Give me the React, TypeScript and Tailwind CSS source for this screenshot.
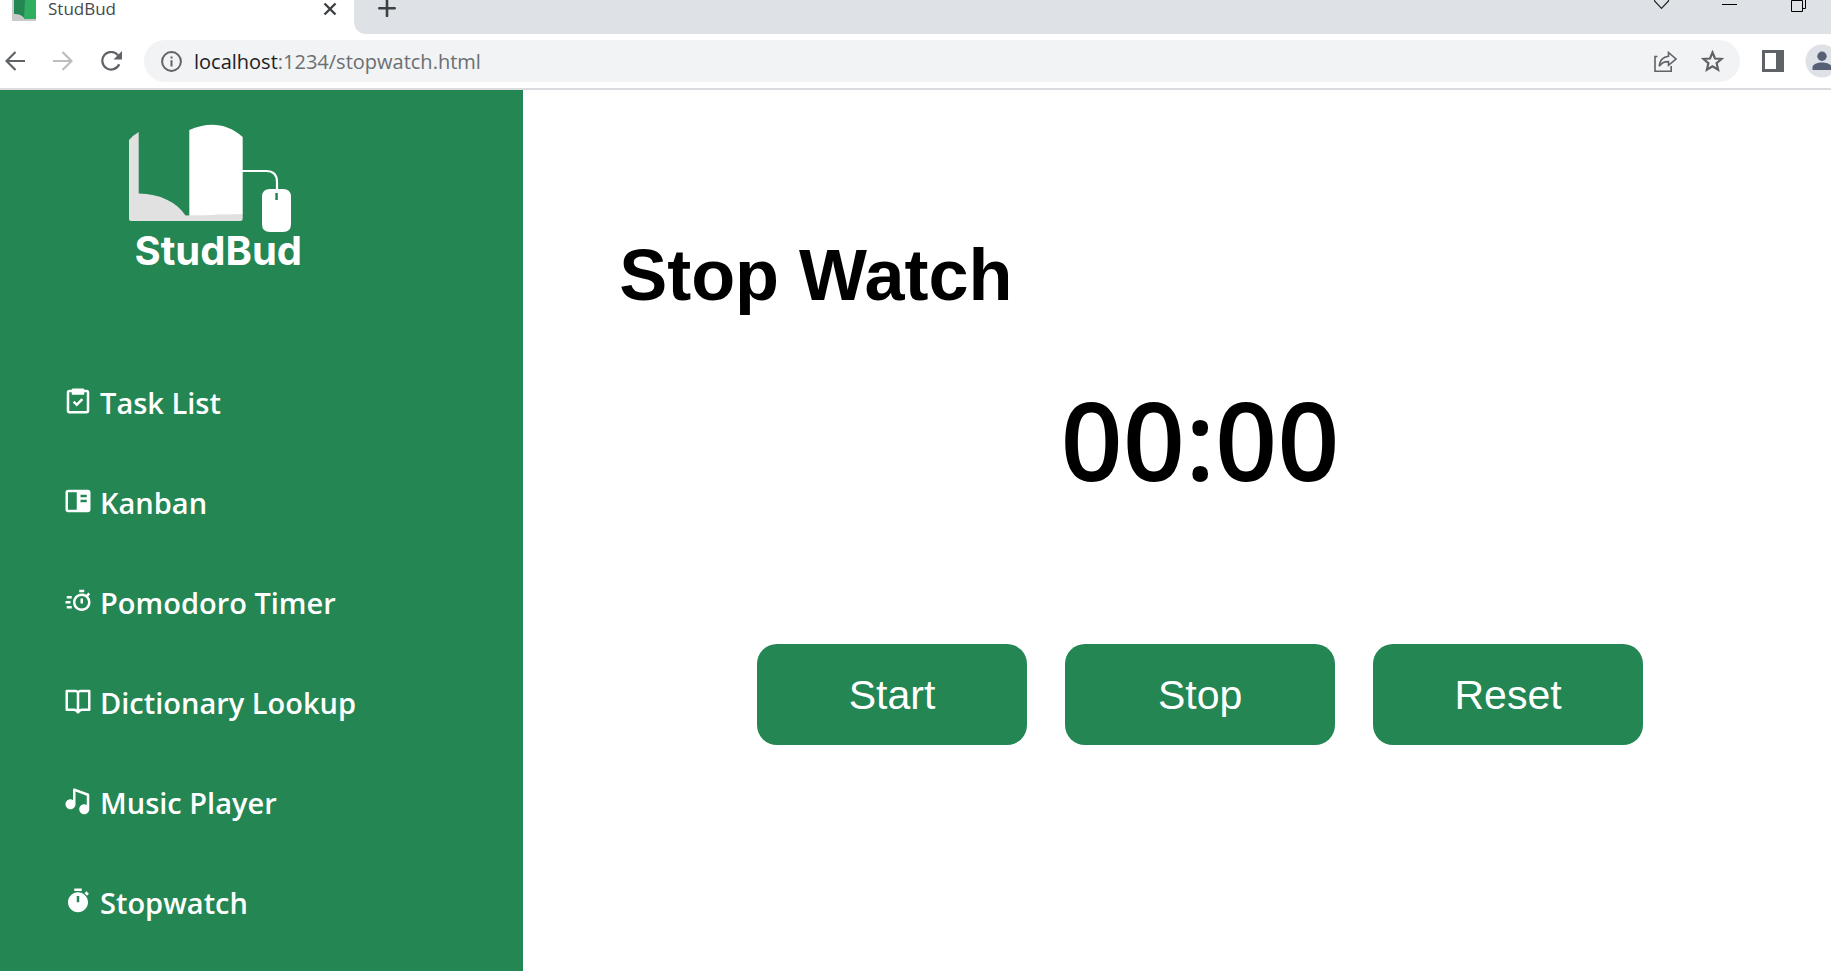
import { useEffect, useState } from "react";
import type { ReactNode } from "react";
import {
  BiBookOpen,
  BiSolidBookContent,
  BiSolidMusic,
  BiSolidStopwatch,
  BiTask,
  BiTimer,
} from "react-icons/bi";

const links = [
  { label: "Task List", icon: BiTask },
  { label: "Kanban", icon: BiSolidBookContent },
  { label: "Pomodoro Timer", icon: BiTimer },
  { label: "Dictionary Lookup", icon: BiBookOpen },
  { label: "Music Player", icon: BiSolidMusic },
  { label: "Stopwatch", icon: BiSolidStopwatch },
];

function IconButton({ label, className = "", children }: { label: string; className?: string; children: ReactNode }) {
  return (
    <button type="button" aria-label={label} className={`shrink-0 ${className}`}>
      {children}
    </button>
  );
}

function TabStrip() {
  return (
    <header className="flex h-[34px] bg-white">
      <div className="flex h-[17px] w-[354px] shrink-0 items-center pr-[17px] pl-3">
        <svg width="24" height="21" viewBox="0 0 24 21" className="mt-1 shrink-0" aria-hidden="true">
          <path d="M0 0H24V21H0Z" fill="#c9c9c9" />
          <path d="M2 0H13V19C10 15 7 14 2 14Z" fill="#238653" />
          <path d="M13 0H24V19H12Z" fill="#2fae62" />
        </svg>
        <span className="ml-3 grow text-[17px] leading-[17px] text-[#45494d]">StudBud</span>
        <IconButton label="Close tab">
          <svg width="14" height="14" viewBox="0 0 14 14" fill="none" stroke="#3c4043" strokeWidth="2.4" className="block">
            <path d="M1.5 1.5 12.5 12.5M12.5 1.5 1.5 12.5" />
          </svg>
        </IconButton>
      </div>
      <div className="flex grow rounded-bl-xl bg-[#dee1e6] pr-6 pl-6">
        <div className="flex h-[17px] grow items-start">
          <IconButton label="New tab">
            <svg width="18" height="17" viewBox="0 0 18 17" fill="none" stroke="#3c4043" strokeWidth="2.6" strokeLinecap="round" className="block">
              <path d="M9 0V16M1.3 8.2H16.7" />
            </svg>
          </IconButton>
          <div className="ml-auto flex items-start">
            <IconButton label="Search tabs">
              <svg width="16" height="10" viewBox="0 0 16 10" fill="none" stroke="#222" strokeWidth="1.2" className="block">
                <path d="M.5 0V1L7.500 8.300 14.500 1V0" />
              </svg>
            </IconButton>
            <IconButton label="Minimize" className="ml-[52px]">
              <svg width="16" height="10" viewBox="0 0 16 10" className="block">
                <path d="M0 4H15V5H0Z" />
              </svg>
            </IconButton>
            <IconButton label="Restore" className="ml-[53px]">
              <svg width="16" height="12" viewBox="0 0 16 12" fill="none" stroke="#000" className="block">
                <path d="M.5 .5H11.5V11.5H.5ZM14.5 0V8.5H11.5" />
              </svg>
            </IconButton>
          </div>
        </div>
      </div>
    </header>
  );
}

function Toolbar() {
  return (
    <div className="flex h-14 items-center overflow-hidden border-b-2 border-[#dadce0] bg-white pl-[5px]">
      <IconButton label="Back">
        <svg width="20" height="20" viewBox="0 0 20 20" fill="none" stroke="#5f6368" strokeWidth="2.2" className="block">
          <path d="M20 10H2M10.500 1 1.500 10 10.500 19" />
        </svg>
      </IconButton>
      <IconButton label="Forward" className="ml-7">
        <svg width="20" height="20" viewBox="0 0 20 20" fill="none" stroke="#bbbdbf" strokeWidth="2.2" className="block">
          <path d="M0 10H18M9.500 1 18.500 10 9.500 19" />
        </svg>
      </IconButton>
      <IconButton label="Reload" className="ml-7">
        <svg width="22" height="20" viewBox="0 0 22 20" fill="none" stroke="#5f6368" strokeWidth="2.200" className="block">
          <path d="M18.2 13.2A8.8 8.8 0 1 1 17 4.2" />
          <path d="M21 0V8.5H12.5Z" fill="#5f6368" stroke="none" />
        </svg>
      </IconButton>
      <div className="ml-[21px] flex h-[42px] min-w-0 grow items-center rounded-full bg-[#f1f3f4] pr-4 pl-[17px]">
        <svg width="21" height="21" viewBox="0 0 21 21" fill="none" stroke="#5f6368" strokeWidth="2" className="shrink-0" aria-hidden="true">
          <circle cx="10.500" cy="10.500" r="9.400" />
          <path d="M10.500 9.300V15.500M10.500 5.400V7.600" />
        </svg>
        <p className="ml-3 grow pt-0.5 text-[20px] leading-[28px] text-[#6b6f73]">
          <span className="text-[#202124]">localhost</span>:1234/stopwatch.html
        </p>
        <IconButton label="Share">
          <svg width="23" height="21" viewBox="0 0 23 21" fill="none" stroke="#5f6368" strokeWidth="1.6" className="block">
            <path d="M3.5 5.5H1V20.2H17.2V15" />
            <path d="M14.5 1.5 22 8 14.5 14.3V10.6C10 10.4 7.5 11.8 5.2 15.2 5.8 9.5 8.5 6 14.5 5.3Z" />
          </svg>
        </IconButton>
        <IconButton label="Bookmark" className="ml-6">
          <svg width="23" height="22" viewBox="0 0 23 22" fill="none" stroke="#5f6368" strokeWidth="2.2" className="block">
            <path d="M11.5 2.5 14 8.500 20.500 9 15.600 13.200 17.100 19.600 11.500 16.200 5.900 19.600 7.400 13.200 2.500 9 9 8.500Z" />
          </svg>
        </IconButton>
      </div>
      <IconButton label="Side panel" className="ml-[22px]">
        <svg width="22" height="22" viewBox="0 0 22 22" className="block">
          <path d="M0 0H22V22H0ZM3 3V19H14V3Z" fill="#5f6368" fillRule="evenodd" />
        </svg>
      </IconButton>
      <IconButton label="Profile" className="-mr-2 ml-[21px]">
        <svg width="34" height="34" viewBox="0 0 34 34" className="block">
          <circle cx="17" cy="17" r="16.5" fill="#dee1e6" />
          <circle cx="17" cy="12.3" r="4.7" fill="#566176" />
          <path d="M7.5 26V23.5C7.5 20.3 12.5 18.6 17 18.6S26.5 20.3 26.5 23.5V26Z" fill="#566176" />
        </svg>
      </IconButton>
    </div>
  );
}

function Logo() {
  return (
    <a href="#home" aria-label="StudBud" className="ml-[129px] flex w-[173px] flex-col items-end text-white">
      <svg width="173" height="110" viewBox="0 0 173 110" className="block" aria-hidden="true">
        <path d="M0 17Q4.500 12 9.700 9V70.500C31 71 48 79 56.500 92.500L113.700 90.500V95.500Q113.700 98 111.500 98H2Q0 98 0 96Z" fill="#e1e1e1" />
        <path d="M60.300 7C78 -1 97 -1 113.700 14V91L60.300 92.700Z" fill="#fff" />
        <path d="M113 48H137Q148 48 148 59V68" fill="none" stroke="#fff" strokeWidth="2.200" />
        <path
          d="M141 66H154Q162 66 162 74V101Q162 109 154 109H141Q133 109 133 101V74Q133 66 141 66ZM146.300 70V77H148.800V70Z"
          fill="#fff"
          fillRule="evenodd"
        />
      </svg>
      <span className="-mt-1 font-['Inter',sans-serif] text-[40px] leading-[44px] font-bold">StudBud</span>
    </a>
  );
}

function Sidebar() {
  return (
    <aside className="w-2/7 shrink-0 bg-[#238653] pt-[33px]">
      <Logo />
      <nav className="mt-20 pl-[63px]">
        <ul>
          {links.map(({ label, icon: Icon }) => (
            <li key={label} className="flex h-[100px] items-center">
              <a href={`#${label.toLowerCase().replace(" ", "-")}`} className="flex items-center gap-[7px] text-[29px] leading-[40px] font-semibold text-white">
                <Icon size={30} className="mb-1 shrink-0" aria-hidden="true" />
                {label}
              </a>
            </li>
          ))}
        </ul>
      </nav>
    </aside>
  );
}

function Stopwatch() {
  const [seconds, setSeconds] = useState(0);
  const [running, setRunning] = useState(false);

  useEffect(() => {
    if (!running) return;
    const id = setInterval(() => setSeconds((value) => value + 1), 1000);
    return () => clearInterval(id);
  }, [running]);

  const pad = (value: number) => String(value).padStart(2, "0");
  const buttonClass =
    "h-[101px] w-[270px] rounded-[20px] bg-[#238653] font-['Liberation_Sans',Arial,sans-serif] text-[41px] leading-[48px] text-white";

  return (
    <main className="grow pt-[143px] pr-[50px] pl-24">
      <h1 className="font-['Liberation_Sans',Arial,sans-serif] text-[72px] leading-[84px] font-bold text-black">Stop Watch</h1>
      <p className="mt-12 text-center text-[109px] leading-[148px] font-semibold text-black">
        {pad(Math.floor(seconds / 60))}:{pad(seconds % 60)}
      </p>
      <div className="mt-[131px] flex justify-center gap-[38px]">
        <button type="button" className={buttonClass} onClick={() => setRunning(true)}>
          Start
        </button>
        <button type="button" className={buttonClass} onClick={() => setRunning(false)}>
          Stop
        </button>
        <button
          type="button"
          className={buttonClass}
          onClick={() => {
            setRunning(false);
            setSeconds(0);
          }}
        >
          Reset
        </button>
      </div>
    </main>
  );
}

export default function App() {
  return (
    <div className="flex min-h-screen flex-col bg-white font-['Open_Sans','Noto_Sans',sans-serif]">
      <TabStrip />
      <Toolbar />
      <div className="flex grow">
        <Sidebar />
        <Stopwatch />
      </div>
    </div>
  );
}
